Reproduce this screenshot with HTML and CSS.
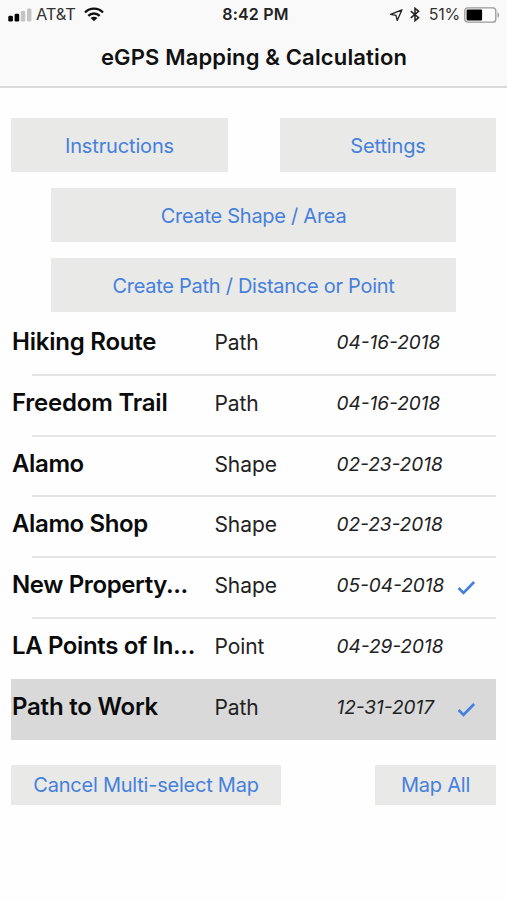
FILE: index.html
```html
<!DOCTYPE html>
<html lang="en">
<head>
<meta charset="utf-8">
<title>eGPS Mapping &amp; Calculation</title>
<link rel="stylesheet" href="styles.css">
</head>
<body>
<header class="topbar">
  <div class="status">
    <div class="status-left">
      <svg class="signal" width="24" height="14" viewBox="0 0 24 14"><rect x="0.3" y="7.8" width="4.6" height="5.700" rx="1.3"/><rect x="6.6" y="5.8" width="4.6" height="7.7" rx="1.3"/><g fill="#c4c4c4"><rect x="12.8" y="3" width="4.4" height="10.5" rx="1.2"/><rect x="19" y="0.5" width="4.4" height="13" rx="1.2"/></g></svg>
      <span class="carrier">AT&amp;T</span>
      <svg class="wifi" width="20" height="15" viewBox="0 0 20 15"><g fill="none" stroke="#111" stroke-width="2.3"><path d="M1 5.5C6 .4 14 .4 19 5.5"/><path d="M4.3 8.9c3.2-3.2 8.200-3.200 11.400 0"/></g><path d="M10 14.200 6.600 10.900c1.900-1.700 4.900-1.700 6.800 0z" fill="#111"/></svg>
    </div>
    <div class="clock">8:42 PM</div>
    <div class="status-right">
      <svg class="location" width="14" height="14" viewBox="0 0 14 14"><path d="M13 1.800 1.600 6.300 7 7.300 8.200 12.400Z" fill="none" stroke="#222" stroke-width="1.300" stroke-linejoin="round"/></svg>
      <svg class="bluetooth" width="10" height="15" viewBox="0 0 10 15"><path d="M.8 4.200 8.600 10.700 5 13.700V1.300L8.600 4.300.8 10.800" fill="none" stroke="#222" stroke-width="1.500"/></svg>
      <span class="percent">51%</span>
      <svg class="battery" width="36" height="16" viewBox="0 0 36 16"><rect x=".8" y=".8" width="31" height="14.400" rx="3" fill="#fdfdfd" stroke="#999" stroke-width="1.300"/><rect x="2.600" y="2.600" width="15.500" height="10.800" rx="1" fill="#000"/><path d="M33.500 5.200c2 .6 2 5 0 5.600z" fill="#999"/></svg>
    </div>
  </div>
  <h1 class="title">eGPS Mapping &amp; Calculation</h1>
</header>
<main class="content">
  <div class="pair">
    <button class="btn instructions">Instructions</button>
    <button class="btn settings">Settings</button>
  </div>
  <button class="btn wide">Create Shape / Area</button>
  <button class="btn wide">Create Path / Distance or Point</button>
  <ul class="list">
    <li class="row"><span class="name">Hiking Route</span><span class="kind">Path</span><span class="date">04-16-2018</span></li>
    <li class="row"><span class="name">Freedom Trail</span><span class="kind">Path</span><span class="date">04-16-2018</span></li>
    <li class="row"><span class="name tight">Alamo</span><span class="kind">Shape</span><span class="date">02-23-2018</span></li>
    <li class="row"><span class="name tight">Alamo Shop</span><span class="kind">Shape</span><span class="date">02-23-2018</span></li>
    <li class="row"><span class="name tight">New Property...</span><span class="kind">Shape</span><span class="date">05-04-2018</span><svg class="check" width="20" height="16" viewBox="0 0 20 16"><path d="M1.600 8 6.500 13 17.100 2" /></svg></li>
    <li class="row last"><span class="name tight">LA Points of In...</span><span class="kind">Point</span><span class="date">04-29-2018</span></li>
    <li class="row selected"><span class="name">Path to Work</span><span class="kind">Path</span><span class="date">12-31-2017</span><svg class="check" width="20" height="16" viewBox="0 0 20 16"><path d="M1.600 8 6.500 13 17.100 2" /></svg></li>
  </ul>
  <div class="actions">
    <button class="btn cancel">Cancel Multi-select Map</button>
    <button class="btn all">Map All</button>
  </div>
</main>
</body>
</html>
```
FILE: styles.css
```css
* { box-sizing: border-box; }
body {
  margin: 0;
  height: 900px;
  overflow: hidden;
  background: #fefefe;
  color: #111;
  font-family: Inter, "Liberation Sans", sans-serif;
}
svg { display: block; flex: none; }
.topbar {
  height: 88px;
  background: #f9f9f9;
  border-bottom: 2px solid #dadada;
}
.status {
  display: grid;
  grid-template-columns: 1fr auto 1fr;
  height: 29px;
  padding: 0 8px;
  align-items: center;
  font-size: 16px;
  line-height: 29px;
}
.status-left, .status-right { display: flex; align-items: center; }
.status-right { justify-content: flex-end; }
.carrier { margin-left: 4px; font-size: 16.500px; letter-spacing: -0.2px; color: #333; }
.wifi { margin-left: 8px; }
.clock { font-weight: 600; letter-spacing: 0.2px; color: #222; padding-left: 4px; }
.location { margin-right: 1px; }
.bluetooth { margin-left: 6px; }
.percent { margin: 0 4px 0 9px; color: #333; letter-spacing: -0.2px; }
.battery { margin-right: -1px; }
.title {
  margin: 0;
  padding-left: 1px;
  text-align: center;
  font-size: 22px;
  line-height: 57px;
  font-weight: 600;
  letter-spacing: 0.15px;
}
.content {
  display: flex;
  flex-direction: column;
  padding: 30px 11px 0;
}
.pair { display: flex; justify-content: space-between; }
.pair .btn { width: 217px; letter-spacing: -0.15px; }
.pair .settings { width: 216px; }
.btn {
  height: 54px;
  padding: 1px 0 0;
  border: 0;
  background: #e9e9e8;
  color: #4580db;
  font: 400 20px/54px Inter, "Liberation Sans", sans-serif;
  letter-spacing: -0.23px;
  white-space: nowrap;
}
.wide { width: 405px; margin: 16px 0 0 40px; letter-spacing: -0.27px; }
.list { margin: 2px 0 0; padding: 0; list-style: none; }
.row {
  position: relative;
  display: grid;
  grid-template-columns: 202.500px 122px 120px 20px;
  height: 60.800px;
  padding-left: 1px;
  line-height: 56px;
  white-space: nowrap;
}
.row::after {
  content: "";
  position: absolute;
  left: 21px;
  right: 0;
  bottom: -1px;
  height: 2px;
  background: #e5e5e5;
}
.row.last::after, .row.selected::after { display: none; }
.row.selected { background: #d9d9d9; }
.name { font-size: 24px; font-weight: 600; letter-spacing: -0.22px; color: #0b0b0b; }
.name.tight { letter-spacing: -0.38px; }
.kind { font-size: 21px; line-height: 57px; letter-spacing: -0.1px; color: #222; }
.date { font-size: 19px; font-style: italic; color: #222; line-height: 57px; }
.check { margin-top: 23px; fill: none; stroke: #427fdf; stroke-width: 2.600; }
.actions { display: flex; justify-content: space-between; margin-top: 25px; }
.actions .btn { height: 40px; line-height: 39px; }
.actions .cancel { width: 270px; }
.actions .all { width: 121px; }
```
